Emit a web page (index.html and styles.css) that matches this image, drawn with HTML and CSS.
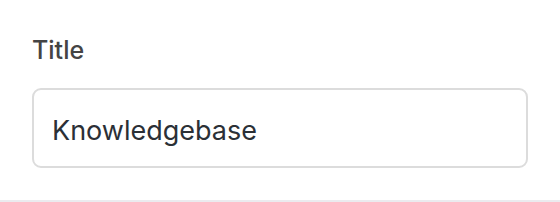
FILE: index.html
```html
<!DOCTYPE html>
<html lang="en">
<head>
    <meta charset="UTF-8">
    <meta name="viewport" content="width=device-width, initial-scale=1.0">
    <title>Edit Knowledgebase</title>
    <link rel="stylesheet" href="styles.css">
</head>
<body>
    <!-- Title field -->
    <div class="field">
        <label class="field-label" for="titleInput">Title</label>
        <input class="field-input" id="titleInput" type="text" value="Knowledgebase">
    </div>
</body>
</html>
```

FILE: styles.css
```css
body {
    margin: 0;
    background-color: #fff;
    font-family: 'Inter', 'Noto Sans', sans-serif;
}
.field {
    display: flex;
    flex-direction: column;
    padding: 34px 32px 32px 32px;
    border-bottom: 2px solid #ebebef;
}
.field-label {
    font-size: 25px;
    font-weight: 500;
    color: #444;
    line-height: 32px;
    margin-bottom: 22px;
}
.field-input {
    box-sizing: border-box;
    width: 496px;
    height: 80px;
    padding: 4px 18px 0 18px;
    border: 2px solid #dcdcdc;
    border-radius: 9px;
    font-family: inherit;
    font-size: 27px;
    color: #2b3036;
    background-color: #fff;
    outline: none;
}
```
